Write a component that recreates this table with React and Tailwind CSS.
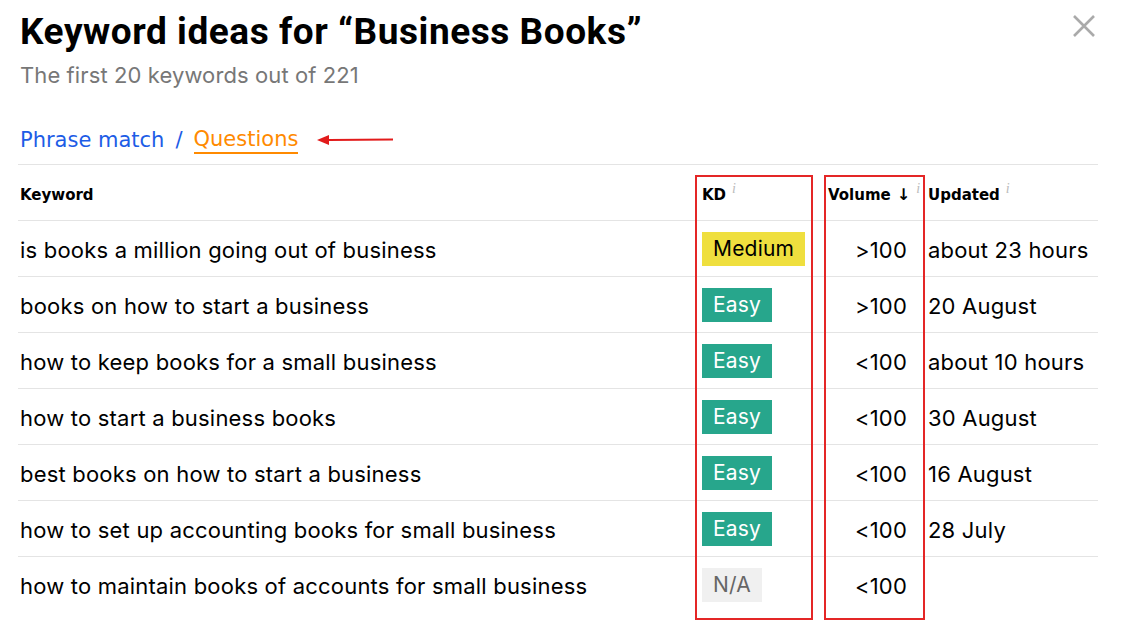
import React from "react";

const rows = [
  { k: "is books a million going out of business", kd: "Medium", v: ">100", u: "about 23 hours" },
  { k: "books on how to start a business", kd: "Easy", v: ">100", u: "20 August" },
  { k: "how to keep books for a small business", kd: "Easy", v: "<100", u: "about 10 hours" },
  { k: "how to start a business books", kd: "Easy", v: "<100", u: "30 August" },
  { k: "best books on how to start a business", kd: "Easy", v: "<100", u: "16 August" },
  { k: "how to set up accounting books for small business", kd: "Easy", v: "<100", u: "28 July" },
  { k: "how to maintain books of accounts for small business", kd: "N/A", v: "<100", u: "" },
];

function Badge({ kd }) {
  const base = "inline-block px-[11px] h-[34px] leading-[34px] text-[21px] tracking-[0.2px]";
  if (kd === "Medium") return <span className={base + " bg-[#efdf3e] text-black"}>Medium</span>;
  if (kd === "Easy") return <span className={base + " bg-[#27a68c] text-white"}>Easy</span>;
  return <span className={base + " bg-[#f0f0f0] text-[#666]"}>N/A</span>;
}

function Info() {
  return (
    <span className="ml-[6px] text-[14px] text-[#bbb] italic font-normal relative top-[-7px]" style={{ fontFamily: "'Liberation Serif', serif" }}>i</span>
  );
}

export default function App() {
  const head = { fontFamily: "'DejaVu Sans', sans-serif" };
  return (
    <div className="w-[1128px] h-[622px] bg-white relative overflow-hidden" style={{ fontFamily: "Inter, sans-serif" }}>
      <div className="absolute left-[1070px] top-[12px] text-[#aaa]">
        <svg width="28" height="28" viewBox="0 0 28 28" fill="none" stroke="currentColor" strokeWidth="2.6" strokeLinecap="butt">
          <path d="M4 4 L24 24 M24 4 L4 24" />
        </svg>
      </div>
      <div className="pl-[18px] pr-[30px] pt-[10px]">
        <h1 className="pl-[2px] text-[37px] leading-[44px] font-bold text-black tracking-[0.55px]" style={{ fontFamily: "Roboto, sans-serif" }}>
          Keyword ideas for “Business Books”
        </h1>
        <div className="pl-[2px] mt-[7px] text-[22px] leading-[28px] text-[#777] tracking-[0.1px]">
          The first 20 keywords out of 221
        </div>
        <div className="pl-[2px] mt-[37px] flex items-center text-[21px] leading-[28px]" style={head}>
          <span className="text-[#1d5ce6]">Phrase match</span>
          <span className="text-[#1d5ce6] mx-[11px]">/</span>
          <span className="text-[#ff8a00] border-b-2 border-[#ff8a00] leading-[24px] pb-[1px]">Questions</span>
          <svg className="ml-[19px]" width="78" height="12" viewBox="0 0 78 12">
            <path d="M12 6 L76 5.5" stroke="#e21b1b" strokeWidth="2" />
            <path d="M0 6 L12 1 L12 11 Z" fill="#e21b1b" />
          </svg>
        </div>
        <div className="relative mt-[10px] w-[1080px]">
          <div className="grid grid-cols-[684px_122px_94px_1fr] border-t border-[#e4e4e4] h-[56px] items-center pt-[5px] text-[15px] font-bold text-black" style={head}>
            <div className="pl-[2px]">Keyword</div>
            <div className="flex items-center">KD<Info /></div>
            <div className="flex items-center pl-[4px]">Volume<span className="ml-[6px] font-bold text-[16px]">↓</span><Info /></div>
            <div className="flex items-center pl-[10px]">Updated<Info /></div>
          </div>
          {rows.map((r, i) => (
            <div key={i} className="grid grid-cols-[684px_122px_94px_1fr] border-t border-[#e4e4e4] h-[56px] items-center text-[22px] tracking-[0.2px] text-black">
              <div className="pl-[2px] pt-[3px] whitespace-nowrap">{r.k}</div>
              <div><Badge kd={r.kd} /></div>
              <div className="text-right pr-[11px] pt-[3px]">{r.v}</div>
              <div className="pl-[10px] pt-[3px] whitespace-nowrap">{r.u}</div>
            </div>
          ))}
          <div className="absolute left-[677px] top-[11px] w-[118px] h-[445px] border-2 border-[#e42626]" />
          <div className="absolute left-[806px] top-[11px] w-[101px] h-[445px] border-2 border-[#e42626]" />
        </div>
      </div>
    </div>
  );
}
